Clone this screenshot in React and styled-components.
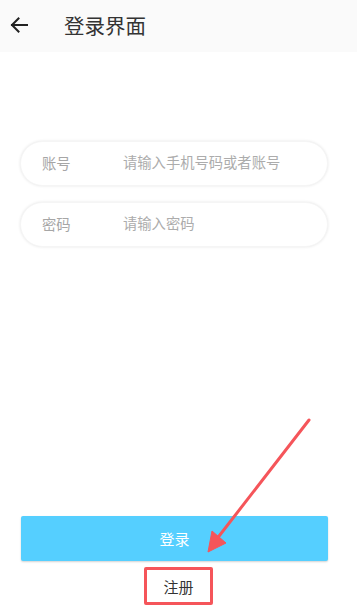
import React from "react";
import styled, { createGlobalStyle } from "styled-components";

const Global = createGlobalStyle`
  html, body { margin: 0; padding: 0; background: #fff; }
  body { font-family: "Noto Sans", "Noto Sans CJK SC", sans-serif; }
  * { box-sizing: border-box; }
`;

const Page = styled.div`
  position: relative;
  height: 616px;
  display: flex;
  flex-direction: column;
  background: #fff;
`;

const Header = styled.header`
  height: 52px;
  display: flex;
  align-items: center;
  padding-bottom: 2px;
  background: #fafafa;
`;

const BackButton = styled.button`
  width: 64px;
  height: 50px;
  border: 0;
  background: none;
  padding: 0 0 0 9px;
  display: flex;
  align-items: center;
  color: #222;
`;

const Title = styled.h1`
  margin: 0;
  font-size: 20.5px;
  font-weight: 400;
  color: #333;
`;

const Form = styled.div`
  display: flex;
  flex-direction: column;
  gap: 16px;
  padding: 89px 29px 0 20px;
`;

const Field = styled.label`
  height: 45px;
  border-radius: 23px;
  background: #fff;
  box-shadow: 0 0 3px rgba(0, 0, 0, 0.1);
  border: 1px solid #f5f5f5;
  display: flex;
  align-items: center;
  padding-left: 21px;
  padding-bottom: 2px;
`;

const FieldLabel = styled.span`
  width: 81px;
  font-size: 14.3px;
  color: #a6a6a6;
`;

const Input = styled.input`
  flex: 1;
  border: 0;
  outline: none;
  background: transparent;
  font-family: inherit;
  font-size: 14.3px;
  color: #333;
  padding: 0;
  &::placeholder { color: #acacac; }
`;

const Bottom = styled.div`
  margin-top: auto;
  display: flex;
  flex-direction: column;
  align-items: center;
  padding: 0 29px 11px 21px;
`;

const LoginButton = styled.button`
  width: 100%;
  height: 45px;
  border: 0;
  border-radius: 2px;
  background: #55cfff;
  box-shadow: 0 1px 2px rgba(0, 0, 0, 0.18);
  color: #fff;
  font-family: inherit;
  font-size: 15px;
`;

const RegisterLink = styled.button`
  margin-top: 6px;
  margin-left: 8px;
  width: 69px;
  height: 38px;
  border: 3px solid #f5555a;
  border-radius: 2px;
  background: #fff;
  font-family: inherit;
  font-size: 15px;
  color: #333;
  padding: 0;
`;

const Annotation = styled.svg`
  position: absolute;
  left: 0;
  top: 0;
  pointer-events: none;
`;

export default function App() {
  return (
    <Page>
      <Global />
      <Header>
        <BackButton aria-label="back">
          <svg width="20" height="20" viewBox="0 0 20 20" fill="none" stroke="#222" strokeWidth="2" strokeLinecap="square">
            <path d="M18 10H3" />
            <path d="M9.5 3.5L3 10l6.5 6.5" />
          </svg>
        </BackButton>
        <Title>登录界面</Title>
      </Header>
      <Form>
        <Field>
          <FieldLabel>账号</FieldLabel>
          <Input placeholder="请输入手机号码或者账号" />
        </Field>
        <Field>
          <FieldLabel>密码</FieldLabel>
          <Input type="password" placeholder="请输入密码" />
        </Field>
      </Form>
      <Bottom>
        <LoginButton>登录</LoginButton>
        <RegisterLink>注册</RegisterLink>
      </Bottom>
      <Annotation width="357" height="616" viewBox="0 0 357 616">
        <path d="M309 420 L216 540" stroke="#f5555a" strokeWidth="3" strokeLinecap="round" />
        <path d="M208 552 L212 531 L226 543 Z" fill="#f5555a" stroke="#f5555a" strokeWidth="1" strokeLinejoin="round" />
      </Annotation>
    </Page>
  );
}
